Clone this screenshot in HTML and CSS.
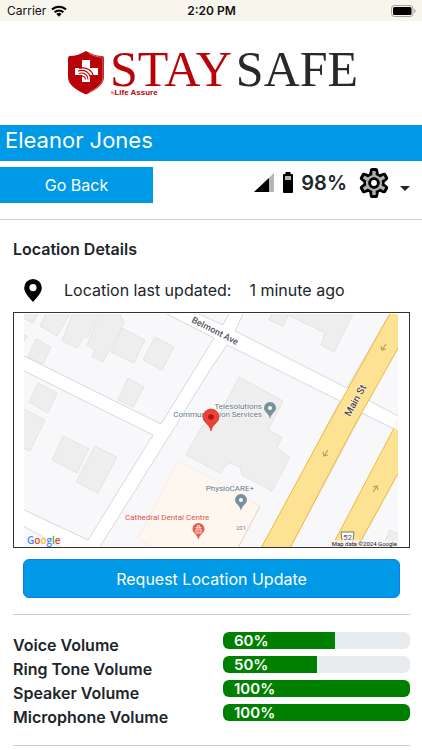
FILE: index.html
```html
<!DOCTYPE html>
<html lang="en">
<head>
<meta charset="utf-8">
<meta name="viewport" content="width=device-width, initial-scale=1">
<title>StaySafe</title>
<link rel="stylesheet" href="styles.css">
</head>
<body>
<div class="status">
  <div class="status-left">
    <span>Carrier</span>
    <svg width="16" height="12" viewBox="0 0 16 12" aria-hidden="true">
      <g fill="none" stroke="#000" stroke-width="2">
        <path d="M1 4.5a10 10 0 0 1 14 0"/>
        <path d="M3.6 7.2a6.3 6.3 0 0 1 8.8 0"/>
      </g>
      <path d="M5.4 9a3.8 3.8 0 0 1 5.2 0L8 11.8z"/>
    </svg>
  </div>
  <time class="status-time">2:20 PM</time>
  <div class="status-right">
    <svg width="25" height="12" viewBox="0 0 25 12" aria-hidden="true">
      <rect x=".5" y=".5" width="21.500" height="11" rx="3" fill="none" stroke="#a3a19d"/>
      <rect x="2" y="2" width="18.500" height="8" rx="1.500"/>
      <path d="M23.300 4v4c.8-.3 1.300-1 1.300-2s-.5-1.700-1.300-2z" fill="#a3a19d"/>
    </svg>
  </div>
</div>

<header class="brand">
  <svg class="shield" width="38" height="46" viewBox="0 0 38 46" aria-hidden="true">
    <path d="M19 1C14 4 8 6 3 6Q1 6 1 8v19c0 8 8 13 18 17.500C29 40 37 35 37 27V8q0-2-2-2C30 6 24 4 19 1z" fill="#b80408"/>
    <path d="M22 3.500c4 2 8 3.400 12.500 3.600q1.400.2 1.400 1.600V27c0 7-6 11.500-13.500 15" fill="none" stroke="#e9a9aa" stroke-width=".6"/>
    <path d="M15 10h8v8h8v7h-8v7h-8v-7H8v-7h7z" fill="#fff"/>
    <g fill="none" stroke="#b80408" stroke-width="1.100">
      <path d="M12 18.500c7-2 14 1.500 14.500 9.500"/>
      <path d="M11 21c7-2 12 1.500 12.500 8"/>
      <path d="M12 23.500c5-1.500 8.500 1 9 6"/>
      <path d="M14 26q4-.5 4.500 3.500"/>
    </g>
  </svg>
  <div class="wordmark">
    <span class="stay">STAY</span><span class="safe">SAFE</span>
    <span class="tagline"><small>By</small>Life Assure</span>
  </div>
</header>

<h1 class="patient">Eleanor Jones</h1>

<div class="toolbar">
  <button class="back" type="button">Go Back</button>
  <div class="device">
    <svg width="21" height="21" viewBox="0 0 21 21" aria-hidden="true">
      <path d="M20 1v19H0z" fill="#b5b5b5"/><path d="M15 6v14H0z"/>
    </svg>
    <svg width="12" height="21" viewBox="0 0 12 21" aria-hidden="true">
      <path d="M3.500 0h5v2H10q1 0 1 1v17q0 1-1 1H2q-1 0-1-1V3q0-1 1-1h1.500z"/><path d="M3 4h6v4H3z" fill="#b5b5b5"/>
    </svg>
    <strong>98%</strong>
    <button class="settings" type="button" aria-label="Settings">
      <svg width="32" height="32" viewBox="-16 -16 32 32" aria-hidden="true">
        <defs>
          <path id="tooth" d="M-3 -8L-2 -13H2L3 -8z"/>
          <g id="gear">
            <circle r="8.500"/>
            <use href="#tooth"/>
            <use href="#tooth" transform="rotate(60)"/>
            <use href="#tooth" transform="rotate(120)"/>
            <use href="#tooth" transform="rotate(180)"/>
            <use href="#tooth" transform="rotate(240)"/>
            <use href="#tooth" transform="rotate(300)"/>
          </g>
        </defs>
        <use href="#gear" stroke="#000" stroke-width="4" stroke-linejoin="round"/>
        <g fill="none" stroke="#b0b0b0">
          <circle r="6.800" stroke-width="2.600"/>
          <path stroke-width="3.400" d="M0 -7V-12M0 7V12M6 -3.500L10.400 -6M-6 3.500L-10.400 6M6 3.500L10.400 6M-6 -3.500L-10.400 -6"/>
        </g>
        <circle r="4.300" fill="#fff" stroke="#000" stroke-width="2.800"/>
      </svg>
      <svg class="caret" width="10" height="5" viewBox="0 0 10 5" aria-hidden="true"><path d="M0 0h10L5 5z" fill="#212529"/></svg>
    </button>
  </div>
</div>

<main>
  <h2>Location Details</h2>
  <div class="updated">
    <svg width="18" height="23" viewBox="0 0 18 23" aria-hidden="true">
      <path fill-rule="evenodd" d="M9 0a8.800 8.800 0 0 0-8.800 8.800C.2 14 5 18.500 9 23c4-4.500 8.800-9 8.800-14.200A8.800 8.800 0 0 0 9 0zm0 5a3.600 3.600 0 1 1 0 7.200A3.600 3.600 0 0 1 9 5z"/>
    </svg>
    <span class="updated-label">Location last updated:</span>
    <span>1 minute ago</span>
  </div>

  <div class="map">
    <svg viewBox="24 314 374 233" role="img" aria-label="Map of the last location">
      <rect x="24" y="314" width="374" height="234" fill="#fff"/>
      <g fill="#f8f8fb" stroke="#d3d4da" stroke-width=".9">
        <path d="M20 310H159L214 338 161 424 20 354z"/>
        <path d="M190 310 223 325 231 310z"/>
        <path d="M245 310 235 331 347 388 392 310z"/>
        <path d="M20 369 153 435 88 540 20 508z"/>
        <path d="M20 524 66 550H20z"/>
        <path d="M227 345 340 401 262 550H98L173 430 210 370z"/>
        <path d="M402 341 368 400 402 418z"/>
        <path d="M362 413 396 430 332 550H289z"/>
        <path d="M402 466 356 550H402z"/>
      </g>
      <path d="M178 461 210 477 260 506 237 550H157L138 538z" fill="#fef7ef" stroke="#f9e3d2" stroke-width=".6"/>
      <path d="M260 506 237 550" stroke="#eac8bd" stroke-width=".8"/>
      <g fill="#eeeeef" stroke="#e0e0e2" stroke-width=".8">
        <path d="M20 310H40L33 323 20 317z"/>
        <path d="M48 310H72L57 336 40 326z"/>
        <path d="M74 310H100L88 337H84L77 348 62 341z"/>
        <path d="M102 310H118L124 323 103 362 92 357 95 350 87 345z"/>
        <path d="M122 328 145 340 134 363 111 352z"/>
        <path d="M155 337 174 347 162 370 143 360z"/>
        <path d="M36 339 51 347 43 364 28 357z"/>
        <path d="M20 333 27 336 20 348z"/>
        <path d="M128 378 144 387 133 407 118 400z"/>
        <path d="M38 383 57 393 48 413 29 402z"/>
        <path d="M20 407 45 420 30 451 20 446z"/>
        <path d="M63 436 89 449 77 473 52 460z"/>
        <path d="M95 446 117 457 98 493 76 482z"/>
        <path d="M274 310 269 320 283 326 288 315 325 333 321 345 334 352 355 310z"/>
        <path d="M239 377 283 401 268 430 282 437 277 448 290 457 272 491 242 475 240 467 230 463 226 465 220 473 186 455 202 426 217 420z"/>
        <path d="M390 530 402 535V548L385 541z"/>
      </g>
      <g fill="#fde293" stroke="#f0b93a">
        <path d="M392 310 325 430 260 550H289L352 430 402 341V310z"/>
        <path d="M402 413 393 430 330 550H356L402 466z"/>
      </g>
      <path d="M392 427 398 430V416z" fill="#f8f8fb"/>
      <g fill="none" stroke="#b39b5c" stroke-width="1.100">
        <path d="M386 344 382 350M381 346 382 350 386 349"/>
        <path d="M328 450 324 456M323 452 324 456 328 455"/>
        <path d="M373 492 377 486M373 487 377 486 378 490"/>
      </g>
      <path d="M341 532h13l-1 8v8h-11v-8z" fill="#fff" stroke="#77776f"/>
      <g class="map-text">
        <text class="street" transform="translate(191 322) rotate(27)">Belmont Ave</text>
        <text class="street main-st" transform="translate(350 417) rotate(-61)">Main St</text>
        <text class="place" x="262" y="409" text-anchor="end">Telesolutions</text>
        <text class="place" x="262" y="417" text-anchor="end">Communication Services</text>
        <text class="place" x="254" y="491" text-anchor="end">PhysioCARE+</text>
        <text class="clinic" x="125" y="520">Cathedral Dental Centre</text>
        <text class="number" x="236" y="530">201</text>
        <text class="route" x="343" y="540">52</text>
      </g>
      <rect x="326" y="540" width="72" height="8" fill="#f5f5f5" fill-opacity=".75"/>
      <text class="credit" x="397" y="546" text-anchor="end">Map data ©2024 Google</text>
      <text class="google" x="27" y="544"><tspan fill="#4285f4">G</tspan><tspan fill="#ea4335">o</tspan><tspan fill="#fbbc04">o</tspan><tspan fill="#4285f4">g</tspan><tspan fill="#34a853">l</tspan><tspan fill="#ea4335">e</tspan></text>
      <g fill="#78909c">
        <path d="M270 402a6 6 0 0 0-6 6c0 4 5 5 6 11 1-6 6-7 6-11a6 6 0 0 0-6-6z"/>
        <path d="M241 494a6 6 0 0 0-6 6c0 4 5 5 6 11 1-6 6-7 6-11a6 6 0 0 0-6-6z"/>
      </g>
      <g fill="#fff"><circle cx="270" cy="408" r="2"/><circle cx="241" cy="500" r="2"/></g>
      <path d="M198.500 523a6 6 0 0 0-6 6c0 4 5 5 6 11 1-6 6-7 6-11a6 6 0 0 0-6-6z" fill="#e45b52"/>
      <path d="M195.500 527.500h6M196 529v4h5v-4zM197.500 527v-1.500h2v1.500M197.500 531h2" fill="none" stroke="#fff" stroke-width=".8"/>
      <path d="M211 409a8 8 0 0 0-8 8c0 6 7 7 8 14 1-7 8-8 8-14a8 8 0 0 0-8-8z" fill="#ea4335" stroke="#c5372c" stroke-width=".7"/>
      <circle cx="211" cy="417" r="2.800" fill="#b31412"/>
    </svg>
  </div>

  <button class="request" type="button">Request Location Update</button>

  <section class="volumes">
    <div class="volume">
      <span id="voice">Voice Volume</span>
      <div class="track" role="progressbar" aria-labelledby="voice" aria-valuenow="60"><div class="fill" style="width:60%">60%</div></div>
    </div>
    <div class="volume">
      <span id="ring">Ring Tone Volume</span>
      <div class="track" role="progressbar" aria-labelledby="ring" aria-valuenow="50"><div class="fill" style="width:50%">50%</div></div>
    </div>
    <div class="volume">
      <span id="speaker">Speaker Volume</span>
      <div class="track" role="progressbar" aria-labelledby="speaker" aria-valuenow="100"><div class="fill" style="width:100%">100%</div></div>
    </div>
    <div class="volume">
      <span id="mic">Microphone Volume</span>
      <div class="track" role="progressbar" aria-labelledby="mic" aria-valuenow="100"><div class="fill" style="width:100%">100%</div></div>
    </div>
  </section>
</main>
</body>
</html>
```
FILE: styles.css
```css
* { box-sizing: border-box; }

body {
  margin: 0;
  background: #fff;
  color: #212529;
  font: 16px/24px Inter, "Liberation Sans", sans-serif;
}

svg { display: block; flex: none; }
button { margin: 0; padding: 0; border: 0; font: inherit; cursor: pointer; }

.status {
  display: grid;
  grid-template-columns: 1fr auto 1fr;
  align-items: center;
  padding: 0 6px 0 7px;
  background: #f8f5ed;
  color: #111;
  font-size: 12px;
  line-height: 21px;
}
.status-left { display: flex; align-items: center; gap: 5px; }
.status-time { font-size: 12px; font-weight: 600; }
.status-right { display: flex; justify-content: flex-end; }

.brand {
  display: flex;
  justify-content: center;
  gap: 5px;
  padding: 29px 0 29px 3px;
}
.wordmark {
  position: relative;
  font-family: "Liberation Serif", serif;
  font-size: 50px;
  line-height: 38px;
  color: #27292b;
}
.stay { color: #b80408; margin-right: 4px; }
.tagline {
  position: absolute;
  left: 1px;
  bottom: -1px;
  color: #b80408;
  font: bold 8px/8px "Liberation Sans", sans-serif;
}
.tagline small { font-size: 3px; font-weight: normal; vertical-align: top; }

.patient {
  margin: 0;
  padding: 0 5px 6px;
  background: #0099e6;
  color: #fff;
  font-size: 22px;
  font-weight: 400;
  line-height: 30px;
}

.toolbar {
  display: flex;
  justify-content: space-between;
  padding: 6px 12px 16px 0;
  border-bottom: 1px solid #cfcfcf;
}
.back {
  width: 153px;
  padding: 6px 0;
  background: #0099e6;
  color: #fff;
}
.device { display: flex; align-items: center; gap: 7px; height: 31px; }
.device strong { font-size: 20px; font-weight: 600; }
.settings {
  display: flex;
  align-items: center;
  gap: 10px;
  margin-left: 4px;
  background: none;
}
.caret { margin-top: 12px; }

main { padding: 17px 12px 0 13px; }
h2 { margin: 0; font-size: 16px; font-weight: 600; line-height: 24px; }
.updated {
  display: flex;
  align-items: center;
  padding: 17px 11px 10px;
}
.updated-label { margin: 0 18px 0 22px; }

.map { padding: 1px 11px 0 10px; border: 1px solid #333; }
.map svg { width: 100%; height: auto; }
.map-text { font-family: Roboto, sans-serif; paint-order: stroke; stroke: #fff; stroke-width: 1px; }
.street { font-size: 9px; font-weight: 500; fill: #55585c; }
.main-st { font-size: 10px; fill: #5c4630; }
.place { font-size: 8px; fill: #5f7682; }
.clinic { font-size: 8px; fill: #dc4c43; }
.number { font-size: 6px; fill: #777; }
.route { font-size: 8px; fill: #555; }
.credit { font: 6px Roboto, sans-serif; fill: #222; }
.google { font: 600 10px "Open Sans", sans-serif; stroke: #fff; stroke-width: 1px; paint-order: stroke; }

.request {
  display: block;
  width: calc(100% - 20px);
  margin: 11px 10px 16px;
  padding: 7px 0 6px;
  border: 1px solid #0d7df7;
  border-radius: 6px;
  background: #0099e6;
  color: #fff;
}

.volumes {
  padding: 17px 0;
  border: solid #cfcfcf;
  border-width: 1px 0;
}
.volume {
  display: grid;
  grid-template-columns: 210px 1fr;
  align-items: start;
  font-weight: 600;
}
.volume span { padding-top: 2px; line-height: 22px; }
.track {
  overflow: hidden;
  border-radius: 6px;
  background: #e9ecef;
}
.fill {
  padding-left: 11px;
  background: #008000;
  color: #fff;
  font-size: 15px;
  line-height: 17px;
}
```
